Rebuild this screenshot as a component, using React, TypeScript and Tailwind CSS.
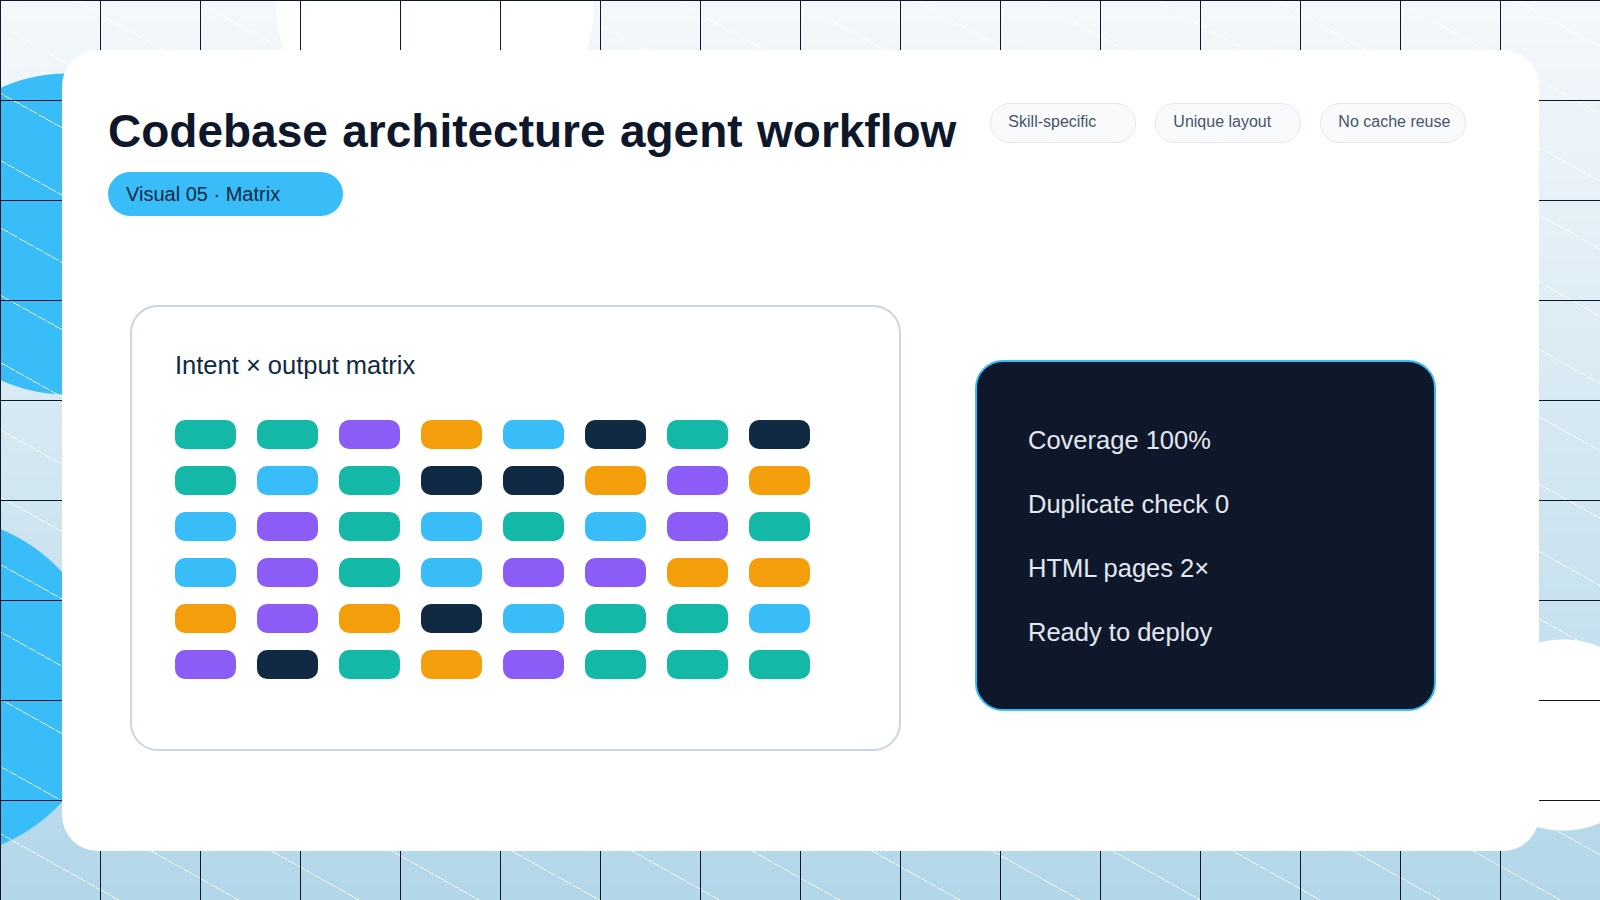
const TEAL = "bg-[#14b8a6]";
const PURPLE = "bg-[#8b5cf6]";
const ORANGE = "bg-[#f59e0b]";
const BLUE = "bg-[#38bdf8]";
const NAVY = "bg-[#102a43]";

const matrix = [
  [TEAL, TEAL, PURPLE, ORANGE, BLUE, NAVY, TEAL, NAVY],
  [TEAL, BLUE, TEAL, NAVY, NAVY, ORANGE, PURPLE, ORANGE],
  [BLUE, PURPLE, TEAL, BLUE, TEAL, BLUE, PURPLE, TEAL],
  [BLUE, PURPLE, TEAL, BLUE, PURPLE, PURPLE, ORANGE, ORANGE],
  [ORANGE, PURPLE, ORANGE, NAVY, BLUE, TEAL, TEAL, BLUE],
  [PURPLE, NAVY, TEAL, ORANGE, PURPLE, TEAL, TEAL, TEAL],
];

const tags = ["Skill-specific", "Unique layout", "No cache reuse"];
const stats = ["Coverage 100%", "Duplicate check 0", "HTML pages 2×", "Ready to deploy"];

export default function App() {
  return (
    <div className="h-[900px] w-[1600px] overflow-hidden pl-[62px] pr-[61px] pt-[50px] font-['Liberation_Sans',Arial,sans-serif] [background-image:linear-gradient(#0f172a_1px,transparent_1px),linear-gradient(90deg,#0f172a_1px,transparent_1px),repeating-linear-gradient(29.26deg,transparent_0,transparent_57.6px,rgba(255,255,255,0.85)_57.6px,rgba(255,255,255,0.85)_58.4px,transparent_58.4px,transparent_58.73px),radial-gradient(circle_at_67px_234px,#38bdf8_160px,transparent_161px),radial-gradient(circle_at_-64px_687px,#38bdf8_170px,transparent_171px),radial-gradient(circle_at_1563px_735px,#ffffff_95px,transparent_96px),radial-gradient(circle_at_435px_5px,#ffffff_158px,transparent_159px),linear-gradient(#f5f8fb,#b2d7e9)] [background-size:100px_100px,100px_100px,auto,auto,auto,auto,auto,auto]">
      <div className="h-[801px] rounded-[36px] bg-white pl-[46px] pt-[52px]">
        <div className="flex items-start">
          <h1 className="text-[46px] leading-[58px] font-bold text-[#0f172a] [word-spacing:1.6px]">Codebase architecture agent workflow</h1>
          <div className="ml-[34px] mt-px flex gap-[19px]">
            {tags.map((tag) => (
              <span
                key={tag}
                className="h-10 w-[146px] rounded-[20px] border border-[#e2e8f0] bg-[#f8fafc] pl-[17px] pt-[6px] text-base text-[#475569]"
              >
                {tag}
              </span>
            ))}
          </div>
        </div>
        <div className="mt-3 h-11 w-[235px] rounded-[22px] bg-[#38bdf8] pl-[18px] text-[20px] leading-[44px] text-[#102a43]">
          Visual 05 · Matrix
        </div>

        <div className="mt-[89px] flex items-start pl-[22px]">
          <section className="h-[446px] w-[771px] rounded-[28px] border-2 border-[#cbd5e1] pl-[43px] pt-[42px]">
            <h2 className="text-[25.5px] leading-[32px] text-[#102a43]">Intent × output matrix</h2>
            <div className="mt-[39px] grid w-[635px] grid-cols-8 gap-x-[21px] gap-y-[17px]">
              {matrix.flat().map((color, i) => (
                <div key={i} className={`h-[29px] rounded-[10px] ${color}`} />
              ))}
            </div>
          </section>
          <section className="ml-[74px] mt-[55px] flex h-[351px] w-[461px] flex-col gap-[32px] rounded-[28px] border-2 border-[#38bdf8] bg-[#0f172a] pl-[51px] pt-[62px] text-[25.5px] leading-[32px] text-[#e2e8f0]">
            {stats.map((stat) => (
              <div key={stat}>{stat}</div>
            ))}
          </section>
        </div>
      </div>
    </div>
  );
}
